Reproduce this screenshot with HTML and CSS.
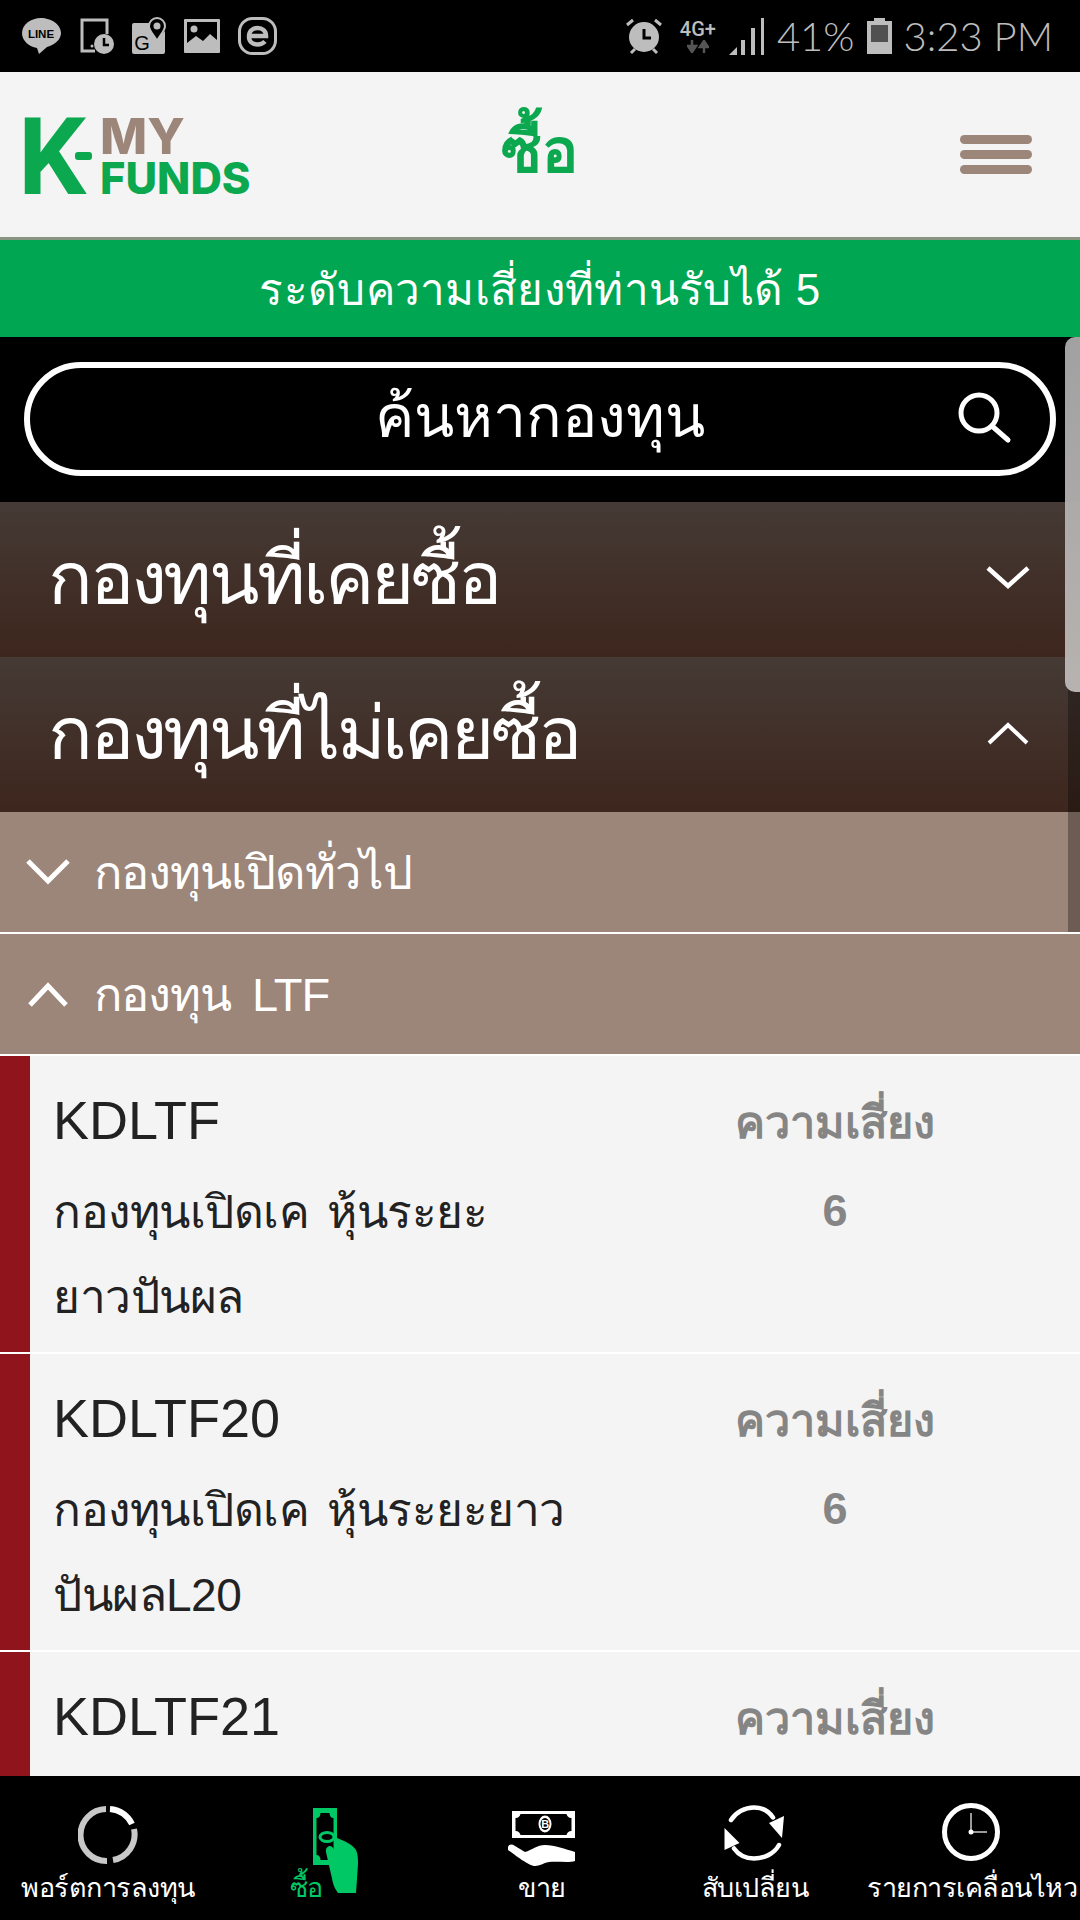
FILE: index.html
```html
<!DOCTYPE html>
<html>
<head>
    <title>K-My Funds</title>
    <link rel="stylesheet" href="styles.css">
</head>
<body>
    <div class="phone">
        <!-- Status bar -->
        <div class="statusbar">
            <div class="status-left">
                <svg width="40" height="38" viewBox="0 0 40 38"><path d="M19 1C9 1 0 7.500 0 16c0 8 7 13.500 15 15l2 6 8-7c8-2.500 14-7.500 14-14C39 7.500 29 1 19 1z" fill="#bdbdbd"/><text x="19" y="21" class="line-mark">LINE</text></svg>
                <svg width="34" height="36" viewBox="0 0 34 36"><path d="M15 33H2V2h25v14" fill="none" stroke="#bdbdbd" stroke-width="3"/><circle cx="12" cy="28" r="1.500" fill="#bdbdbd"/><circle cx="24" cy="26" r="10" fill="#bdbdbd"/><path d="M24 20v7h5" fill="none" stroke="#000" stroke-width="2.500"/></svg>
                <svg width="34" height="38" viewBox="0 0 34 38"><path d="M2 6h15c0 6 4 10 8 16l8-8v21a2 2 0 0 1-2 2H2a2 2 0 0 1-2-2V8a2 2 0 0 1 2-2z" fill="#bdbdbd"/><path d="M25 1a8 8 0 0 1 8 8c0 5-5 9-8 15-3-6-8-10-8-15a8 8 0 0 1 8-8z" fill="#000" stroke="#bdbdbd" stroke-width="2"/><circle cx="25" cy="9" r="3.500" fill="#bdbdbd"/><text x="10" y="33" class="map-mark">G</text></svg>
                <svg width="36" height="34" viewBox="0 0 36 34"><rect width="36" height="34" rx="1" fill="#bdbdbd"/><rect x="3" y="3" width="30" height="25" fill="#000"/><circle cx="10" cy="10" r="3.500" fill="#bdbdbd"/><path d="M3 28v-4l9-7 7 5 7-7 7 6v7z" fill="#bdbdbd"/></svg>
                <svg width="39" height="38" viewBox="0 0 39 38"><rect x="1.500" y="1.500" width="36" height="35" rx="13" fill="none" stroke="#bdbdbd" stroke-width="3"/><path d="M11 19h17c0-5-3.500-8-8.500-8S11 14.500 11 19.500s3.500 8 8.500 8c3 0 5.500-1 7.500-3" fill="none" stroke="#bdbdbd" stroke-width="4.500"/></svg>
            </div>
            <div class="status-right">
                <svg class="alarm" width="38" height="38" viewBox="0 0 38 38"><circle cx="19" cy="20" r="15" fill="#bdbdbd"/><path d="M2 8l6-5M36 8l-6-5M6 36l4-4M32 36l-4-4" stroke="#bdbdbd" stroke-width="3"/><path d="M19 12v9h7" fill="none" stroke="#000" stroke-width="3"/></svg>
                <div class="net">
                    <span class="net-label">4G+</span>
                    <svg width="22" height="13" viewBox="0 0 22 13"><path d="M5 0v7M1 6l4 6 4-6z" stroke="#555" stroke-width="2.500" fill="#555"/><path d="M17 13V6M13 7l4-6 4 6z" stroke="#555" stroke-width="2.500" fill="#555"/></svg>
                </div>
                <svg width="36" height="37" viewBox="0 0 36 37"><path d="M0 37l8-8v8zM12 22h4v15h-4zM22 10h4v27h-4zM32 0h3v37h-3z" fill="#bdbdbd"/></svg>
                <span class="status-text">41%</span>
                <svg width="25" height="36" viewBox="0 0 25 36"><path d="M7 0h11v3h7v33H0V3h7z" fill="#bdbdbd"/><rect x="4" y="7" width="17" height="17" fill="#505050"/></svg>
                <span class="status-text">3:23 PM</span>
            </div>
        </div>

        <!-- Header -->
        <div class="header">
            <div class="logo">
                <span class="logo-k">K</span>
                <span class="logo-dash"></span>
                <div class="logo-words">
                    <span class="logo-my">MY</span>
                    <span class="logo-funds">FUNDS</span>
                </div>
            </div>
            <div class="page-title">ซื้อ</div>
            <div class="menu">
                <span></span>
                <span></span>
                <span></span>
            </div>
        </div>

        <div class="risk-banner">ระดับความเสี่ยงที่ท่านรับได้ 5</div>

        <div class="search-area">
            <div class="search-box">
                <span>ค้นหากองทุน</span>
                <svg class="search-icon" width="56" height="56" viewBox="0 0 56 56"><circle cx="23" cy="23" r="18" fill="none" stroke="#fff" stroke-width="5"/><path d="M36 36l16 14" stroke="#fff" stroke-width="5" stroke-linecap="round"/></svg>
            </div>
        </div>

        <div class="section">
            <span>กองทุนที่เคยซื้อ</span>
            <svg width="44" height="26" viewBox="0 0 44 26"><path d="M2 3l20 18L42 3" fill="none" stroke="#fff" stroke-width="4.500"/></svg>
        </div>
        <div class="section">
            <span>กองทุนที่ไม่เคยซื้อ</span>
            <svg width="44" height="26" viewBox="0 0 44 26"><path d="M3 23L22 5l19 18" fill="none" stroke="#fff" stroke-width="4"/></svg>
        </div>

        <div class="sub-section">
            <svg width="44" height="28" viewBox="0 0 44 28"><path d="M2 3l20 20L42 3" fill="none" stroke="#fff" stroke-width="5"/></svg>
            <span>กองทุนเปิดทั่วไป</span>
        </div>
        <div class="sub-section">
            <svg width="44" height="28" viewBox="0 0 44 28"><path d="M4 25L22 6l18 19" fill="none" stroke="#fff" stroke-width="5"/></svg>
            <span>กองทุน LTF</span>
        </div>

        <div class="fund-list">
            <div class="fund">
                <div class="fund-info">
                    <div class="fund-code">KDLTF</div>
                    <div class="fund-name">กองทุนเปิดเค หุ้นระยะ<br>ยาวปันผล</div>
                </div>
                <div class="fund-risk">
                    <div class="risk-label">ความเสี่ยง</div>
                    <div class="risk-value">6</div>
                </div>
            </div>
            <div class="fund">
                <div class="fund-info">
                    <div class="fund-code">KDLTF20</div>
                    <div class="fund-name">กองทุนเปิดเค หุ้นระยะยาว<br>ปันผลL20</div>
                </div>
                <div class="fund-risk">
                    <div class="risk-label">ความเสี่ยง</div>
                    <div class="risk-value">6</div>
                </div>
            </div>
            <div class="fund">
                <div class="fund-info">
                    <div class="fund-code">KDLTF21</div>
                </div>
                <div class="fund-risk">
                    <div class="risk-label">ความเสี่ยง</div>
                </div>
            </div>
        </div>

        <!-- Bottom navigation -->
        <div class="bottom-nav">
            <div class="nav-item">
                <div class="nav-icon">
                    <svg class="icon-portfolio" width="60" height="60" viewBox="0 0 60 60"><g fill="none" stroke-width="6"><path d="M32 4a26 26 0 0 1 22 15" stroke="#fff"/><path d="M56 24a26 26 0 0 1-21 31" stroke="#c8c8c8"/><path d="M29 56A26 26 0 0 1 28 4" stroke="#c8c8c8"/></g></svg>
                </div>
                <span>พอร์ตการลงทุน</span>
            </div>
            <div class="nav-item active">
                <div class="nav-icon">
                    <svg class="icon-buy" width="46" height="86" viewBox="0 0 46 86"><path fill-rule="evenodd" d="M0 0h24v57H0zM3.500 10c2.500 0 4-2 4-5h9c0 3 1.500 5 4 5v37c-2.500 0-4 2-4 5h-9c0-3-1.500-5-4-5z" fill="#00c864"/><ellipse cx="14" cy="29" rx="7" ry="4.500" fill="none" stroke="#00c864" stroke-width="3"/><path d="M24 30c8 3 16 7 19 12 2 4 2 10 2 14l-2 29H25c-2-3-4-6-5-10l-7-31c-1-6 6-9 8-2l3 10z" fill="#00c864"/></svg>
                </div>
                <span>ซื้อ</span>
            </div>
            <div class="nav-item">
                <div class="nav-icon">
                    <svg class="icon-sell" width="70" height="60" viewBox="0 0 70 60"><path fill-rule="evenodd" d="M5 3h63v27H5zM8.500 10c3 0 4.500-2 5-4h46c.5 2 2 4 5 4v13c-3 0-4.500 2-5 4h-46c-.5-2-2-4-5-4z" fill="#fff"/><ellipse cx="38" cy="16" rx="6.500" ry="8.500" fill="#fff"/><ellipse cx="38" cy="16" rx="4.500" ry="6" fill="#000"/><text x="38" y="20" class="baht-mark">B</text><path d="M1 39c1-3 4-3 7-1l10 6c7-2 12-7 20-7 10 0 20 4 30 7v9c-6 2-18 0-26 1-6 1-9 4-14 4-6 0-20-11-27-16z" fill="#fff"/></svg>
                </div>
                <span>ขาย</span>
            </div>
            <div class="nav-item">
                <div class="nav-icon">
                    <svg class="icon-switch" width="62" height="60" viewBox="0 0 62 60"><g fill="none" stroke="#fff" stroke-width="4.500" stroke-linecap="round"><path d="M7 16C12 8 21 3.500 30 3.500c8 0 15 4 19 10"/><path d="M55 41c-5 9-15 13.500-25 13.500-8 0-15-3-20-10"/></g><path d="M60 12l-2 22-13-15z" fill="#fff"/><path d="M0.500 24l0 22 15-7z" fill="#fff"/></svg>
                </div>
                <span>สับเปลี่ยน</span>
            </div>
            <div class="nav-item">
                <div class="nav-icon">
                    <svg width="60" height="60" viewBox="0 0 60 60"><circle cx="29" cy="29" r="26.500" fill="none" stroke="#fff" stroke-width="5"/><path d="M29 10v19h16" fill="none" stroke="#ccc" stroke-width="1.500"/><circle cx="29" cy="29" r="2.500" fill="#fff"/></svg>
                </div>
                <span>รายการเคลื่อนไหว</span>
            </div>
        </div>

        <div class="scroll-track"></div>
        <div class="scroll-thumb"></div>
    </div>
</body>
</html>
```

FILE: styles.css
```css
* {
    box-sizing: border-box;
}
body {
    margin: 0;
    font-family: "Liberation Sans", Arial, sans-serif;
    background-color: #000;
}
.phone {
    position: relative;
    width: 1080px;
    height: 1920px;
    overflow: hidden;
    display: flex;
    flex-direction: column;
}
/* Status bar */
.statusbar {
    height: 72px;
    background-color: #000;
    display: flex;
    justify-content: space-between;
    align-items: center;
    padding: 0 27px 0 22px;
}
.status-left {
    display: flex;
    align-items: center;
    gap: 18px;
}
.status-right {
    display: flex;
    align-items: center;
    gap: 12px;
}
.alarm {
    margin-right: 4px;
}
.line-mark {
    font-family: "Liberation Sans", Arial, sans-serif;
    font-size: 11.500px;
    font-weight: bold;
    text-anchor: middle;
    fill: #000;
}
.map-mark {
    font-family: "Liberation Sans", Arial, sans-serif;
    font-size: 20px;
    text-anchor: middle;
    fill: #000;
}
.baht-mark {
    font-family: "Liberation Sans", Arial, sans-serif;
    font-size: 11px;
    font-weight: bold;
    text-anchor: middle;
    fill: #fff;
}
.net {
    display: flex;
    flex-direction: column;
    align-items: center;
    width: 38px;
}
.net-label {
    font-family: "Roboto", sans-serif;
    font-size: 20px;
    font-weight: 500;
    line-height: 21px;
    color: #bdbdbd;
}
.status-text {
    font-family: "Lato", sans-serif;
    font-weight: 300;
    font-size: 40px;
    line-height: 50px;
    color: #bdbdbd;
    white-space: nowrap;
}
/* Header */
.header {
    height: 168px;
    background-color: #f4f4f4;
    border-bottom: 3px solid #8a9380;
    display: grid;
    grid-template-columns: 1fr auto 1fr;
    align-items: center;
    padding: 0 48px 0 24px;
}
.logo {
    display: flex;
    align-items: flex-start;
    height: 76px;
    font-weight: 800;
}
.logo-k {
    font-family: "Roboto", sans-serif;
    font-weight: 700;
    font-size: 107px;
    line-height: 76px;
    color: #0ca84f;
    width: 60px;
    margin: 3px 0 0 -6px;
}
.logo-dash {
    width: 17px;
    height: 8px;
    border-radius: 3px;
    background-color: #0ca84f;
    margin: 35px 0 0 -3px;
}
.logo-words {
    display: flex;
    flex-direction: column;
    margin-left: 8px;
    font-family: "Inter", sans-serif;
}
.logo-my {
    font-size: 50px;
    line-height: 38px;
    color: #9c8579;
}
.logo-funds {
    font-size: 43.500px;
    line-height: 38px;
    margin-top: 4px;
    color: #0ca84f;
}
.page-title {
    font-size: 60px;
    font-weight: bold;
    color: #0ca84f;
    line-height: 80px;
    margin-top: -6px;
    padding-left: 22px;
}
.menu {
    justify-self: end;
    display: flex;
    flex-direction: column;
    gap: 6px;
    width: 72px;
}
.menu span {
    display: block;
    height: 9px;
    border-radius: 5px;
    background-color: #9c8579;
}
.risk-banner {
    height: 97px;
    background-color: #00a651;
    color: #fff;
    font-size: 44px;
    letter-spacing: 0.300px;
    display: flex;
    align-items: center;
    justify-content: center;
}
.search-area {
    height: 165px;
    background-color: #000;
    padding: 25px 24px 26px;
}
.search-box {
    position: relative;
    height: 114px;
    border: 6px solid #fff;
    border-radius: 57px;
    color: #fff;
    font-size: 59px;
    padding-bottom: 6px;
    display: flex;
    align-items: center;
    justify-content: center;
}
.search-icon {
    position: absolute;
    right: 38px;
    top: 22px;
}
.section {
    height: 155px;
    background: linear-gradient(#453a35, #3d261d);
    color: #fff;
    font-size: 74px;
    letter-spacing: -3.200px;
    display: flex;
    align-items: center;
    justify-content: space-between;
    padding: 0 50px 4px 48px;
}
.sub-section {
    height: 122px;
    background-color: #9c8579;
    border-bottom: 2px solid #fff;
    color: #fff;
    font-size: 47px;
    letter-spacing: -1px;
    word-spacing: 9px;
    display: flex;
    align-items: center;
    gap: 24px;
    padding: 0 26px;
}
.sub-section:last-of-type {
    border-bottom: none;
    height: 120px;
}
/* Fund list */
.fund-list {
    flex: 1;
    background-color: #f4f4f4;
    overflow: hidden;
}
.fund {
    display: flex;
    height: 298px;
    border-bottom: 2px solid #fff;
    background: linear-gradient(#8f141b, #8f141b) left top / 30px 100% no-repeat;
    background-clip: padding-box;
    padding: 32px 0 0 53px;
}
.fund-info {
    width: 582px;
}
.fund-code {
    font-size: 54px;
    line-height: 64px;
    color: #222;
}
.fund-name {
    font-size: 46px;
    line-height: 85px;
    letter-spacing: -0.500px;
    word-spacing: 6px;
    color: #222;
    margin-top: 18px;
}
.fund-risk {
    width: 400px;
    text-align: center;
    color: #858585;
    font-weight: bold;
    font-size: 45px;
    margin-top: -2px;
}
.risk-value {
    margin-top: 27px;
}
/* Bottom navigation */
.bottom-nav {
    height: 144px;
    background-color: #000;
    display: grid;
    grid-template-columns: 216px 180px 292px 134px 258px;
    padding-top: 27px;
}
.nav-item {
    display: flex;
    flex-direction: column;
    align-items: center;
    color: #fff;
    font-size: 27px;
    letter-spacing: -0.500px;
    white-space: nowrap;
}
.nav-icon {
    height: 62px;
}
.nav-icon svg {
    display: block;
}
.nav-item:last-child {
    padding-left: 42px;
}
.nav-item span {
    line-height: 40px;
    margin-top: 3px;
}
.nav-item.active {
    color: #00c864;
}
.icon-portfolio {
    margin-top: 2px;
}
.icon-buy {
    margin: 5px 0 0 60px;
}
.icon-sell {
    margin-top: 5px;
}
.icon-switch {
    margin-top: 1px;
}
/* Scrollbar overlay */
.scroll-track {
    position: absolute;
    right: 0;
    top: 337px;
    width: 12px;
    height: 595px;
    background-color: rgba(0, 0, 0, 0.3);
}
.scroll-thumb {
    position: absolute;
    right: 0;
    top: 337px;
    width: 15px;
    height: 355px;
    background: linear-gradient(rgba(170, 170, 170, 0.95), rgba(190, 186, 184, 0.95));
    border-radius: 10px 0 0 10px;
}
```
